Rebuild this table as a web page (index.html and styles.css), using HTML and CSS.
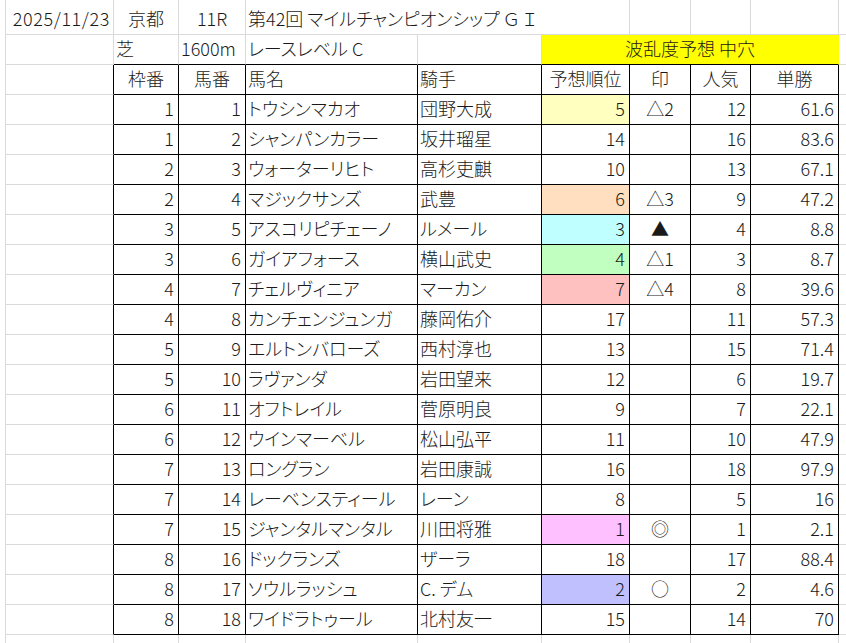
FILE: index.html
```html
<!DOCTYPE html>
<html lang="ja">
<head>
<meta charset="utf-8">
<title>マイルチャンピオンシップ 予想</title>
<link rel="stylesheet" href="styles.css">
</head>
<body>
<div class="sheet">
  <!-- row 1 -->
  <div class="c a r date">2025/11/23</div>
  <div class="c m">京都</div>
  <div class="c m">11R</div>
  <div class="c span3 title">第42回 マイルチャンピオンシップ Ｇ Ｉ</div>
  <div class="c"></div><div class="c"></div><div class="c"></div><div class="c j"></div>
  <!-- row 2 -->
  <div class="c a"></div>
  <div class="c tt">芝</div>
  <div class="c tt">1600m</div>
  <div class="c tt">レースレベル C</div>
  <div class="c tt"></div>
  <div class="c tt m yellow">波乱度予想 中穴</div>
  <div class="c j"></div>
  <!-- header -->
  <div class="c a tl"></div>
  <div class="c t m">枠番</div><div class="c t m">馬番</div><div class="c t">馬名</div><div class="c t">騎手</div>
  <div class="c t m">予想順位</div><div class="c t m">印</div><div class="c t m">人気</div><div class="c t m">単勝</div>
  <div class="c j"></div>

  <div class="c a tl"></div><div class="c t r">1</div><div class="c t r">1</div><div class="c t">トウシンマカオ</div><div class="c t">団野大成</div><div class="c t r f-yellow">5</div><div class="c t m">△2</div><div class="c t r">12</div><div class="c t r">61.6</div><div class="c j"></div>
  <div class="c a tl"></div><div class="c t r">1</div><div class="c t r">2</div><div class="c t">シャンパンカラー</div><div class="c t">坂井瑠星</div><div class="c t r">14</div><div class="c t m"></div><div class="c t r">16</div><div class="c t r">83.6</div><div class="c j"></div>
  <div class="c a tl"></div><div class="c t r">2</div><div class="c t r">3</div><div class="c t">ウォーターリヒト</div><div class="c t">高杉吏麒</div><div class="c t r">10</div><div class="c t m"></div><div class="c t r">13</div><div class="c t r">67.1</div><div class="c j"></div>
  <div class="c a tl"></div><div class="c t r">2</div><div class="c t r">4</div><div class="c t">マジックサンズ</div><div class="c t">武豊</div><div class="c t r f-peach">6</div><div class="c t m">△3</div><div class="c t r">9</div><div class="c t r">47.2</div><div class="c j"></div>
  <div class="c a tl"></div><div class="c t r">3</div><div class="c t r">5</div><div class="c t">アスコリピチェーノ</div><div class="c t">ルメール</div><div class="c t r f-cyan">3</div><div class="c t m">▲</div><div class="c t r">4</div><div class="c t r">8.8</div><div class="c j"></div>
  <div class="c a tl"></div><div class="c t r">3</div><div class="c t r">6</div><div class="c t">ガイアフォース</div><div class="c t">横山武史</div><div class="c t r f-green">4</div><div class="c t m">△1</div><div class="c t r">3</div><div class="c t r">8.7</div><div class="c j"></div>
  <div class="c a tl"></div><div class="c t r">4</div><div class="c t r">7</div><div class="c t">チェルヴィニア</div><div class="c t">マーカン</div><div class="c t r f-red">7</div><div class="c t m">△4</div><div class="c t r">8</div><div class="c t r">39.6</div><div class="c j"></div>
  <div class="c a tl"></div><div class="c t r">4</div><div class="c t r">8</div><div class="c t">カンチェンジュンガ</div><div class="c t">藤岡佑介</div><div class="c t r">17</div><div class="c t m"></div><div class="c t r">11</div><div class="c t r">57.3</div><div class="c j"></div>
  <div class="c a tl"></div><div class="c t r">5</div><div class="c t r">9</div><div class="c t">エルトンバローズ</div><div class="c t">西村淳也</div><div class="c t r">13</div><div class="c t m"></div><div class="c t r">15</div><div class="c t r">71.4</div><div class="c j"></div>
  <div class="c a tl"></div><div class="c t r">5</div><div class="c t r">10</div><div class="c t">ラヴァンダ</div><div class="c t">岩田望来</div><div class="c t r">12</div><div class="c t m"></div><div class="c t r">6</div><div class="c t r">19.7</div><div class="c j"></div>
  <div class="c a tl"></div><div class="c t r">6</div><div class="c t r">11</div><div class="c t">オフトレイル</div><div class="c t">菅原明良</div><div class="c t r">9</div><div class="c t m"></div><div class="c t r">7</div><div class="c t r">22.1</div><div class="c j"></div>
  <div class="c a tl"></div><div class="c t r">6</div><div class="c t r">12</div><div class="c t">ウインマーベル</div><div class="c t">松山弘平</div><div class="c t r">11</div><div class="c t m"></div><div class="c t r">10</div><div class="c t r">47.9</div><div class="c j"></div>
  <div class="c a tl"></div><div class="c t r">7</div><div class="c t r">13</div><div class="c t">ロングラン</div><div class="c t">岩田康誠</div><div class="c t r">16</div><div class="c t m"></div><div class="c t r">18</div><div class="c t r">97.9</div><div class="c j"></div>
  <div class="c a tl"></div><div class="c t r">7</div><div class="c t r">14</div><div class="c t">レーベンスティール</div><div class="c t">レーン</div><div class="c t r">8</div><div class="c t m"></div><div class="c t r">5</div><div class="c t r">16</div><div class="c j"></div>
  <div class="c a tl"></div><div class="c t r">7</div><div class="c t r">15</div><div class="c t">ジャンタルマンタル</div><div class="c t">川田将雅</div><div class="c t r f-magenta">1</div><div class="c t m">◎</div><div class="c t r">1</div><div class="c t r">2.1</div><div class="c j"></div>
  <div class="c a tl"></div><div class="c t r">8</div><div class="c t r">16</div><div class="c t">ドックランズ</div><div class="c t">ザーラ</div><div class="c t r">18</div><div class="c t m"></div><div class="c t r">17</div><div class="c t r">88.4</div><div class="c j"></div>
  <div class="c a tl"></div><div class="c t r">8</div><div class="c t r">17</div><div class="c t">ソウルラッシュ</div><div class="c t">C. デム</div><div class="c t r f-lavender">2</div><div class="c t m">○</div><div class="c t r">2</div><div class="c t r">4.6</div><div class="c j"></div>
  <div class="c a tl"></div><div class="c t r">8</div><div class="c t r">18</div><div class="c t">ワイドラトゥール</div><div class="c t">北村友一</div><div class="c t r">15</div><div class="c t m"></div><div class="c t r">14</div><div class="c t r">70</div><div class="c j"></div>

  <!-- row below table -->
  <div class="c a"></div><div class="c"></div><div class="c"></div><div class="c"></div><div class="c"></div><div class="c"></div><div class="c"></div><div class="c"></div><div class="c"></div><div class="c j"></div>
</div>
</body>
</html>
```
FILE: styles.css
```css
* {
  box-sizing: border-box;
}

html,
body {
  margin: 0;
  padding: 0;
  background: #ffffff;
  overflow: hidden;
}

body {
  font-family: "Noto Sans CJK JP", "Noto Sans", sans-serif;
  font-size: 18px;
  font-weight: 300;
  color: #1a1a1a;
  font-feature-settings: "palt";
}

.sheet {
  display: grid;
  grid-template-columns: 109px 65px 67px 172px 124px 88px 61px 60px 88px 1fr;
  grid-template-rows: 35px repeat(21, 30px);
  margin-left: 5px;
  height: 643px;
  overflow: hidden;
}

.c {
  display: flex;
  align-items: flex-end;
  justify-content: flex-start;
  min-width: 0;
  padding: 0 4px 6px 2px;
  line-height: 20px;
  white-space: nowrap;
  border-right: 1px solid #dadada;
  border-bottom: 1px solid #dadada;
}

.a {
  border-left: 1px solid #dadada;
}

.j {
  border-right: 0;
  padding: 0;
}

.r {
  justify-content: flex-end;
}

.m {
  justify-content: center;
  padding-left: 3px;
  padding-right: 3px;
}

.date {
  letter-spacing: 0.6px;
  padding-right: 3px;
}

.span3 {
  grid-column: span 3;
}

.title {
  overflow: visible;
}

.tt {
  border-bottom-color: #000;
}

.yellow {
  grid-column: span 4;
  background: #ffff00;
  border-right-color: #ffff00;
}

.t {
  border-right-color: #000;
  border-bottom-color: #000;
}

.tl {
  border-right-color: #000;
}

.f-yellow {
  background: #ffffc0;
}

.f-peach {
  background: #ffdfbf;
}

.f-cyan {
  background: #c0ffff;
}

.f-green {
  background: #c0ffc0;
}

.f-red {
  background: #ffc0c0;
}

.f-magenta {
  background: #ffc0ff;
}

.f-lavender {
  background: #c0c0ff;
}
```
